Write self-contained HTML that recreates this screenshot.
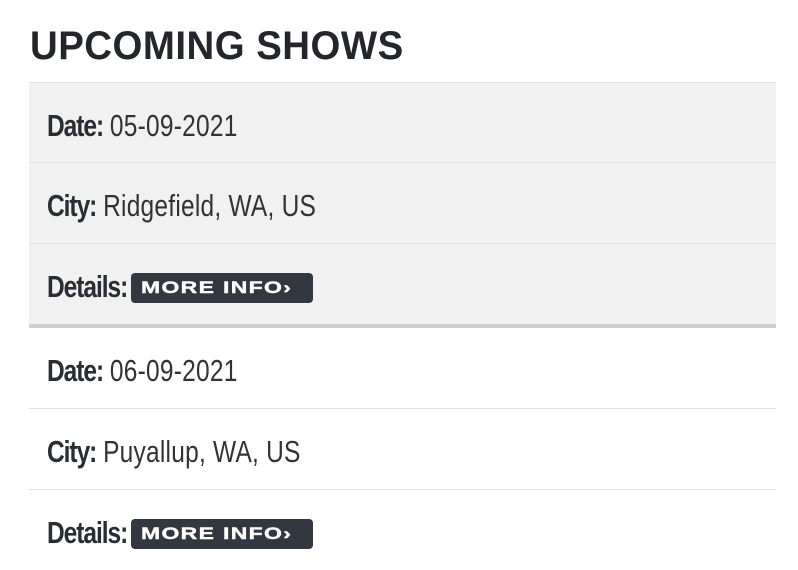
<!DOCTYPE html>
<html><head><style>
body{margin:0;background:#fff;width:798px;height:567px;overflow:hidden;font-family:"Liberation Sans",sans-serif;color:#23262b}
h1{position:absolute;left:30px;top:22px;margin:0;font-size:40px;font-weight:bold;line-height:48px;transform-origin:0 0;transform:scaleX(0.96);letter-spacing:0.5px;white-space:nowrap}
.blk{position:absolute;left:29px;width:747px}
.row{height:80px;border-top:1px solid #e2e2e2;box-sizing:border-box;position:relative}
.t{position:absolute;left:18px;top:26px;font-family:"Liberation Sans Narrow","Liberation Sans",sans-serif;font-size:31px;line-height:34px;transform-origin:0 0;transform:scaleX(0.79);white-space:nowrap;color:#2a2d33}
.t b{font-weight:bold;letter-spacing:-1.3px}
.t span{font-weight:normal;color:#333;letter-spacing:0.3px}
.btn{position:absolute;left:102px;top:29px;width:182px;height:30px;background:#333840;border-radius:4px;overflow:hidden}
.btn span{position:absolute;left:10px;top:0;color:#fff;font-weight:bold;font-size:17px;line-height:30px;letter-spacing:1px;white-space:nowrap;transform-origin:0 0;transform:scaleX(1.35);-webkit-text-stroke:0.4px #fff}
</style></head><body>
<h1>UPCOMING SHOWS</h1>
<div class="blk" style="top:82px;background:#f1f1f1">
<div class="row"><div class="t"><b>Date:</b> <span>05-09-2021</span></div></div>
<div class="row" style="height:81px"><div class="t"><b>City:</b> <span>Ridgefield, WA, US</span></div></div>
<div class="row" style="height:81px"><div class="t"><b>Details:</b></div><div class="btn"><span>MORE INFO›</span></div></div>
</div>
<div class="blk" style="top:324px;height:4px;background:#cfcfcf"></div>
<div class="blk" style="top:328px;background:#fff">
<div class="row" style="border-top:none"><div class="t"><b>Date:</b> <span>06-09-2021</span></div></div>
<div class="row" style="height:81px"><div class="t"><b>City:</b> <span>Puyallup, WA, US</span></div></div>
<div class="row" style="height:81px"><div class="t"><b>Details:</b></div><div class="btn"><span>MORE INFO›</span></div></div>
</div>
</body></html>
